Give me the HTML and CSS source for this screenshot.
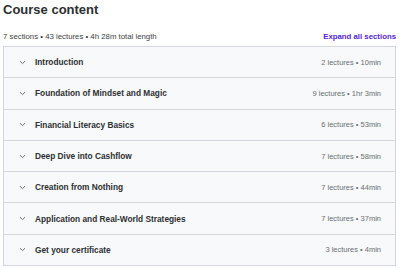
FILE: index.html
```html
<!DOCTYPE html>
<html lang="en">
<head>
  <meta charset="UTF-8">
  <title>Course content</title>
  <link rel="stylesheet" href="styles.css">
</head>
<body>
  <div class="curriculum">
    <h2 class="title">Course content</h2>

    <div class="summary">
      <span>7 sections • 43 lectures • 4h 28m total length</span>
      <a class="expand" href="#">Expand all sections</a>
    </div>

    <!-- Sections -->
    <div class="sections">
      <div class="section">
        <span class="chev"><svg width="7" height="5" viewBox="0 0 7 5"><path d="M1 1.2 L3.5 3.6 L6 1.2" fill="none" stroke="#6a6f73" stroke-width="1"/></svg></span>
        <span class="name">Introduction</span>
        <span class="meta">2 lectures • 10min</span>
      </div>
      <div class="section">
        <span class="chev"><svg width="7" height="5" viewBox="0 0 7 5"><path d="M1 1.2 L3.5 3.6 L6 1.2" fill="none" stroke="#6a6f73" stroke-width="1"/></svg></span>
        <span class="name">Foundation of Mindset and Magic</span>
        <span class="meta">9 lectures • 1hr 3min</span>
      </div>
      <div class="section">
        <span class="chev"><svg width="7" height="5" viewBox="0 0 7 5"><path d="M1 1.2 L3.5 3.6 L6 1.2" fill="none" stroke="#6a6f73" stroke-width="1"/></svg></span>
        <span class="name">Financial Literacy Basics</span>
        <span class="meta">6 lectures • 53min</span>
      </div>
      <div class="section">
        <span class="chev"><svg width="7" height="5" viewBox="0 0 7 5"><path d="M1 1.2 L3.5 3.6 L6 1.2" fill="none" stroke="#6a6f73" stroke-width="1"/></svg></span>
        <span class="name">Deep Dive into Cashflow</span>
        <span class="meta">7 lectures • 58min</span>
      </div>
      <div class="section">
        <span class="chev"><svg width="7" height="5" viewBox="0 0 7 5"><path d="M1 1.2 L3.5 3.6 L6 1.2" fill="none" stroke="#6a6f73" stroke-width="1"/></svg></span>
        <span class="name">Creation from Nothing</span>
        <span class="meta">7 lectures • 44min</span>
      </div>
      <div class="section">
        <span class="chev"><svg width="7" height="5" viewBox="0 0 7 5"><path d="M1 1.2 L3.5 3.6 L6 1.2" fill="none" stroke="#6a6f73" stroke-width="1"/></svg></span>
        <span class="name">Application and Real-World Strategies</span>
        <span class="meta">7 lectures • 37min</span>
      </div>
      <div class="section">
        <span class="chev"><svg width="7" height="5" viewBox="0 0 7 5"><path d="M1 1.2 L3.5 3.6 L6 1.2" fill="none" stroke="#6a6f73" stroke-width="1"/></svg></span>
        <span class="name">Get your certificate</span>
        <span class="meta">3 lectures • 4min</span>
      </div>
    </div>
  </div>
</body>
</html>
```

FILE: styles.css
```css
body {
    margin: 0;
    padding: 0;
    background: #fff;
    font-family: "Liberation Sans", Arial, sans-serif;
    color: #2d2f31;
}

.curriculum {
    padding: 0 4px 0 3px;
}

.title {
    margin: 0;
    padding-top: 2px;
    font-size: 13px;
    line-height: 15px;
    font-weight: 700;
    color: #2d2f31;
}

.summary {
    display: flex;
    justify-content: space-between;
    align-items: center;
    margin-top: 14px;
    height: 10px;
    font-size: 7.8px;
    color: #3e4143;
}

.expand {
    color: #5624d0;
    font-weight: 700;
    font-size: 7.8px;
    text-decoration: none;
}

.sections {
    margin-top: 5px;
    border: 1px solid #d1d7dc;
    border-bottom: none;
}

.section {
    display: flex;
    align-items: center;
    height: 30.3px;
    padding: 0 14px 0 15px;
    background: #f7f9fa;
    border-bottom: 1px solid #d1d7dc;
}

.chev {
    display: flex;
    width: 16px;
}

.name {
    flex: 1;
    font-size: 8.3px;
    font-weight: 700;
    color: #2d2f31;
}

.meta {
    font-size: 7.5px;
    color: #6a6f73;
}
```
